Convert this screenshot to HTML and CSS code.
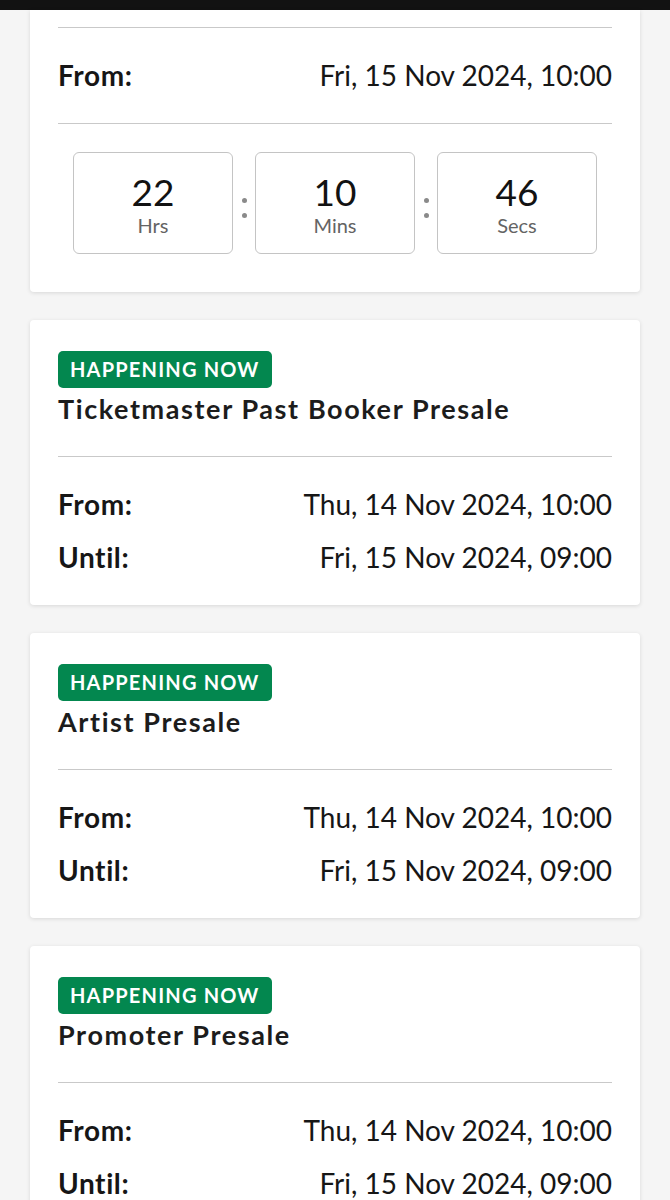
FILE: index.html
```html
<!DOCTYPE html>
<html lang="en">
<head>
  <meta charset="UTF-8">
  <meta name="viewport" content="width=device-width, initial-scale=1.0">
  <title>Presales</title>
  <link rel="stylesheet" href="styles.css">
</head>
<body>
  <div class="topbar"></div>

  <div class="list">
    <!-- General sale countdown -->
    <div class="card card-first">
      <div class="divider"></div>
      <div class="times">
        <div class="row">
          <span class="label">From:</span>
          <span class="value">Fri, 15 Nov 2024, 10:00</span>
        </div>
      </div>
      <div class="divider"></div>
      <div class="countdown">
        <div class="unit">
          <div class="num">22</div>
          <div class="unit-label">Hrs</div>
        </div>
        <div class="sep"><span></span><span></span></div>
        <div class="unit">
          <div class="num">10</div>
          <div class="unit-label">Mins</div>
        </div>
        <div class="sep"><span></span><span></span></div>
        <div class="unit">
          <div class="num">46</div>
          <div class="unit-label">Secs</div>
        </div>
      </div>
    </div>

    <div class="card">
      <span class="badge">HAPPENING NOW</span>
      <div class="title">Ticketmaster Past Booker Presale</div>
      <div class="divider"></div>
      <div class="times">
        <div class="row">
          <span class="label">From:</span>
          <span class="value">Thu, 14 Nov 2024, 10:00</span>
        </div>
        <div class="row">
          <span class="label">Until:</span>
          <span class="value">Fri, 15 Nov 2024, 09:00</span>
        </div>
      </div>
    </div>

    <div class="card">
      <span class="badge">HAPPENING NOW</span>
      <div class="title">Artist Presale</div>
      <div class="divider"></div>
      <div class="times">
        <div class="row">
          <span class="label">From:</span>
          <span class="value">Thu, 14 Nov 2024, 10:00</span>
        </div>
        <div class="row">
          <span class="label">Until:</span>
          <span class="value">Fri, 15 Nov 2024, 09:00</span>
        </div>
      </div>
    </div>

    <div class="card">
      <span class="badge">HAPPENING NOW</span>
      <div class="title">Promoter Presale</div>
      <div class="divider"></div>
      <div class="times">
        <div class="row">
          <span class="label">From:</span>
          <span class="value">Thu, 14 Nov 2024, 10:00</span>
        </div>
        <div class="row">
          <span class="label">Until:</span>
          <span class="value">Fri, 15 Nov 2024, 09:00</span>
        </div>
      </div>
    </div>
  </div>
</body>
</html>
```

FILE: styles.css
```css
body {
  margin: 0;
  padding: 0;
  background: #f5f5f5;
  font-family: "Lato", "Noto Sans", sans-serif;
  color: #161616;
}

.topbar {
  height: 10px;
  background: #121212;
}

.list {
  display: flex;
  flex-direction: column;
  gap: 28px;
  padding: 0 30px 40px;
}

.card {
  background: #fff;
  border-radius: 4px;
  box-shadow: 0 1px 4px rgba(0, 0, 0, 0.12);
  padding: 31px 28px 0;
  display: flex;
  flex-direction: column;
  align-items: flex-start;
}

.card-first {
  padding-top: 17px;
  padding-bottom: 38px;
  border-radius: 0 0 4px 4px;
}

.divider {
  align-self: stretch;
  height: 1px;
  background: #c9c9c9;
}

.badge {
  background: #03874f;
  color: #fff;
  font-size: 20px;
  font-weight: 700;
  letter-spacing: 1.2px;
  line-height: 37px;
  height: 37px;
  padding: 0 12px;
  border-radius: 5px;
}

.title {
  font-size: 27px;
  font-weight: 700;
  letter-spacing: 1.6px;
  line-height: 42px;
  margin-bottom: 26px;
  color: #1c1c1c;
}

.times {
  align-self: stretch;
  display: flex;
  flex-direction: column;
  gap: 23px;
  padding: 32px 0 33px;
}

.card-first .times {
  padding-bottom: 33px;
}

.row {
  display: flex;
  justify-content: space-between;
  align-items: center;
  font-size: 28px;
  line-height: 30px;
}

.label {
  font-weight: 700;
  letter-spacing: 0.6px;
}

.countdown {
  align-self: stretch;
  display: flex;
  padding: 0 15px;
  margin-top: 28px;
}

.unit {
  flex: 1;
  height: 102px;
  box-sizing: border-box;
  border: 1px solid #c4c4c4;
  border-radius: 6px;
  display: flex;
  flex-direction: column;
  align-items: center;
  justify-content: center;
  padding-top: 4px;
}

.num {
  font-size: 37px;
  line-height: 40px;
  color: #121212;
}

.unit-label {
  font-size: 20px;
  line-height: 26px;
  color: #646464;
}

.sep {
  width: 22px;
  display: flex;
  flex-direction: column;
  align-items: center;
  justify-content: center;
  gap: 10px;
  padding-top: 10px;
}

.sep span {
  width: 5px;
  height: 5px;
  border-radius: 50%;
  background: #8a8a8a;
}
```
